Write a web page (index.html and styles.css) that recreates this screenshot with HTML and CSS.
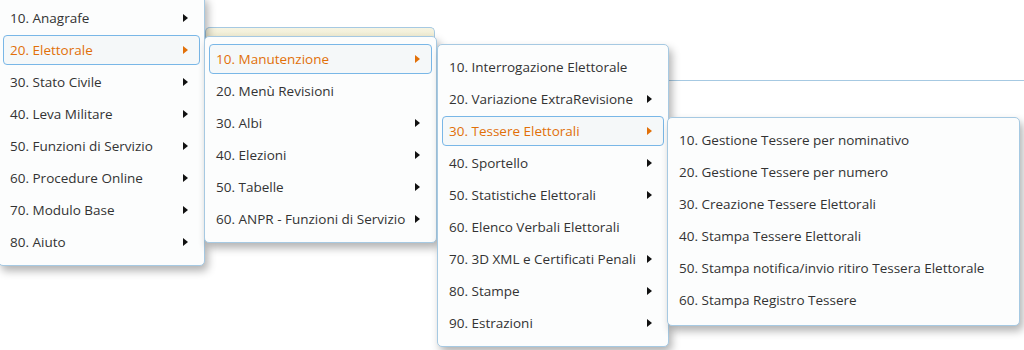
FILE: index.html
```html
<!DOCTYPE html>
<html lang="it">
<head>
    <meta charset="UTF-8">
    <meta name="viewport" content="width=device-width, initial-scale=1.0">
    <title>Menu - Elettorale</title>
    <link rel="stylesheet" href="styles.css">
</head>
<body>
    <div class="page-header"></div>

    <div class="tab-strip"></div>

    <ul class="menu menu-main">
        <li class="menu-item has-sub"><span>10. Anagrafe</span></li>
        <li class="menu-item has-sub active"><span>20. Elettorale</span></li>
        <li class="menu-item has-sub"><span>30. Stato Civile</span></li>
        <li class="menu-item has-sub"><span>40. Leva Militare</span></li>
        <li class="menu-item has-sub"><span>50. Funzioni di Servizio</span></li>
        <li class="menu-item has-sub"><span>60. Procedure Online</span></li>
        <li class="menu-item has-sub"><span>70. Modulo Base</span></li>
        <li class="menu-item has-sub"><span>80. Aiuto</span></li>
    </ul>

    <ul class="menu menu-elettorale">
        <li class="menu-item has-sub active"><span>10. Manutenzione</span></li>
        <li class="menu-item"><span>20. Menù Revisioni</span></li>
        <li class="menu-item has-sub"><span>30. Albi</span></li>
        <li class="menu-item has-sub"><span>40. Elezioni</span></li>
        <li class="menu-item has-sub"><span>50. Tabelle</span></li>
        <li class="menu-item has-sub"><span>60. ANPR - Funzioni di Servizio</span></li>
    </ul>

    <ul class="menu menu-manutenzione">
        <li class="menu-item"><span>10. Interrogazione Elettorale</span></li>
        <li class="menu-item has-sub"><span>20. Variazione ExtraRevisione</span></li>
        <li class="menu-item has-sub active"><span>30. Tessere Elettorali</span></li>
        <li class="menu-item has-sub"><span>40. Sportello</span></li>
        <li class="menu-item has-sub"><span>50. Statistiche Elettorali</span></li>
        <li class="menu-item"><span>60. Elenco Verbali Elettorali</span></li>
        <li class="menu-item has-sub"><span>70. 3D XML e Certificati Penali</span></li>
        <li class="menu-item has-sub"><span>80. Stampe</span></li>
        <li class="menu-item has-sub"><span>90. Estrazioni</span></li>
    </ul>

    <ul class="menu menu-tessere">
        <li class="menu-item"><span>10. Gestione Tessere per nominativo</span></li>
        <li class="menu-item"><span>20. Gestione Tessere per numero</span></li>
        <li class="menu-item"><span>30. Creazione Tessere Elettorali</span></li>
        <li class="menu-item"><span>40. Stampa Tessere Elettorali</span></li>
        <li class="menu-item"><span>50. Stampa notifica/invio ritiro Tessera Elettorale</span></li>
        <li class="menu-item"><span>60. Stampa Registro Tessere</span></li>
    </ul>
</body>
</html>
```

FILE: styles.css
```css
body {
    font-family: "Open Sans", Arial, sans-serif;
    font-size: 13.5px;
    color: #333333;
    margin: 0;
    background-color: #ffffff;
    position: relative;
    height: 350px;
    overflow: hidden;
}
.page-header {
    height: 80px;
    border-bottom: 1px solid #a6c9e2;
}
.tab-strip {
    position: absolute;
    left: 205px;
    top: 27px;
    width: 228px;
    height: 16px;
    border: 1px solid #a6c9e2;
    border-bottom: none;
    border-radius: 5px 5px 0 0;
    background: linear-gradient(#f6f4e2, #ebe6c6);
}
.menu {
    position: absolute;
    box-sizing: border-box;
    list-style: none;
    margin: 0;
    padding: 7px 4px 8px;
    display: flex;
    flex-direction: column;
    gap: 2px;
    background-color: #fcfdfd;
    border: 1px solid #a6c9e2;
    border-radius: 5px;
    box-shadow: 3px 5px 9px rgba(0,0,0,0.3);
}
.menu-main {
    left: -2px;
    top: -5px;
    width: 207px;
}
.menu-elettorale {
    left: 204px;
    top: 36px;
    width: 233px;
}
.menu-manutenzione {
    left: 437px;
    top: 44px;
    width: 232px;
}
.menu-tessere {
    left: 667px;
    top: 117px;
    width: 353px;
    padding-bottom: 10px;
}
.menu-item {
    height: 28px;
    display: flex;
    align-items: center;
    justify-content: space-between;
    padding: 0 11px 0 6px;
    border: 1px solid transparent;
    border-radius: 4px;
    white-space: nowrap;
}
.menu-item.has-sub::after {
    content: "";
    border-left: 5px solid #111111;
    border-top: 4px solid transparent;
    border-bottom: 4px solid transparent;
    margin-left: 8px;
}
.menu-item.active {
    border-color: #79b7e7;
    background-color: #f5f8f9;
    color: #e17009;
}
.menu-item.active::after {
    border-left-color: #e17009;
}
```
